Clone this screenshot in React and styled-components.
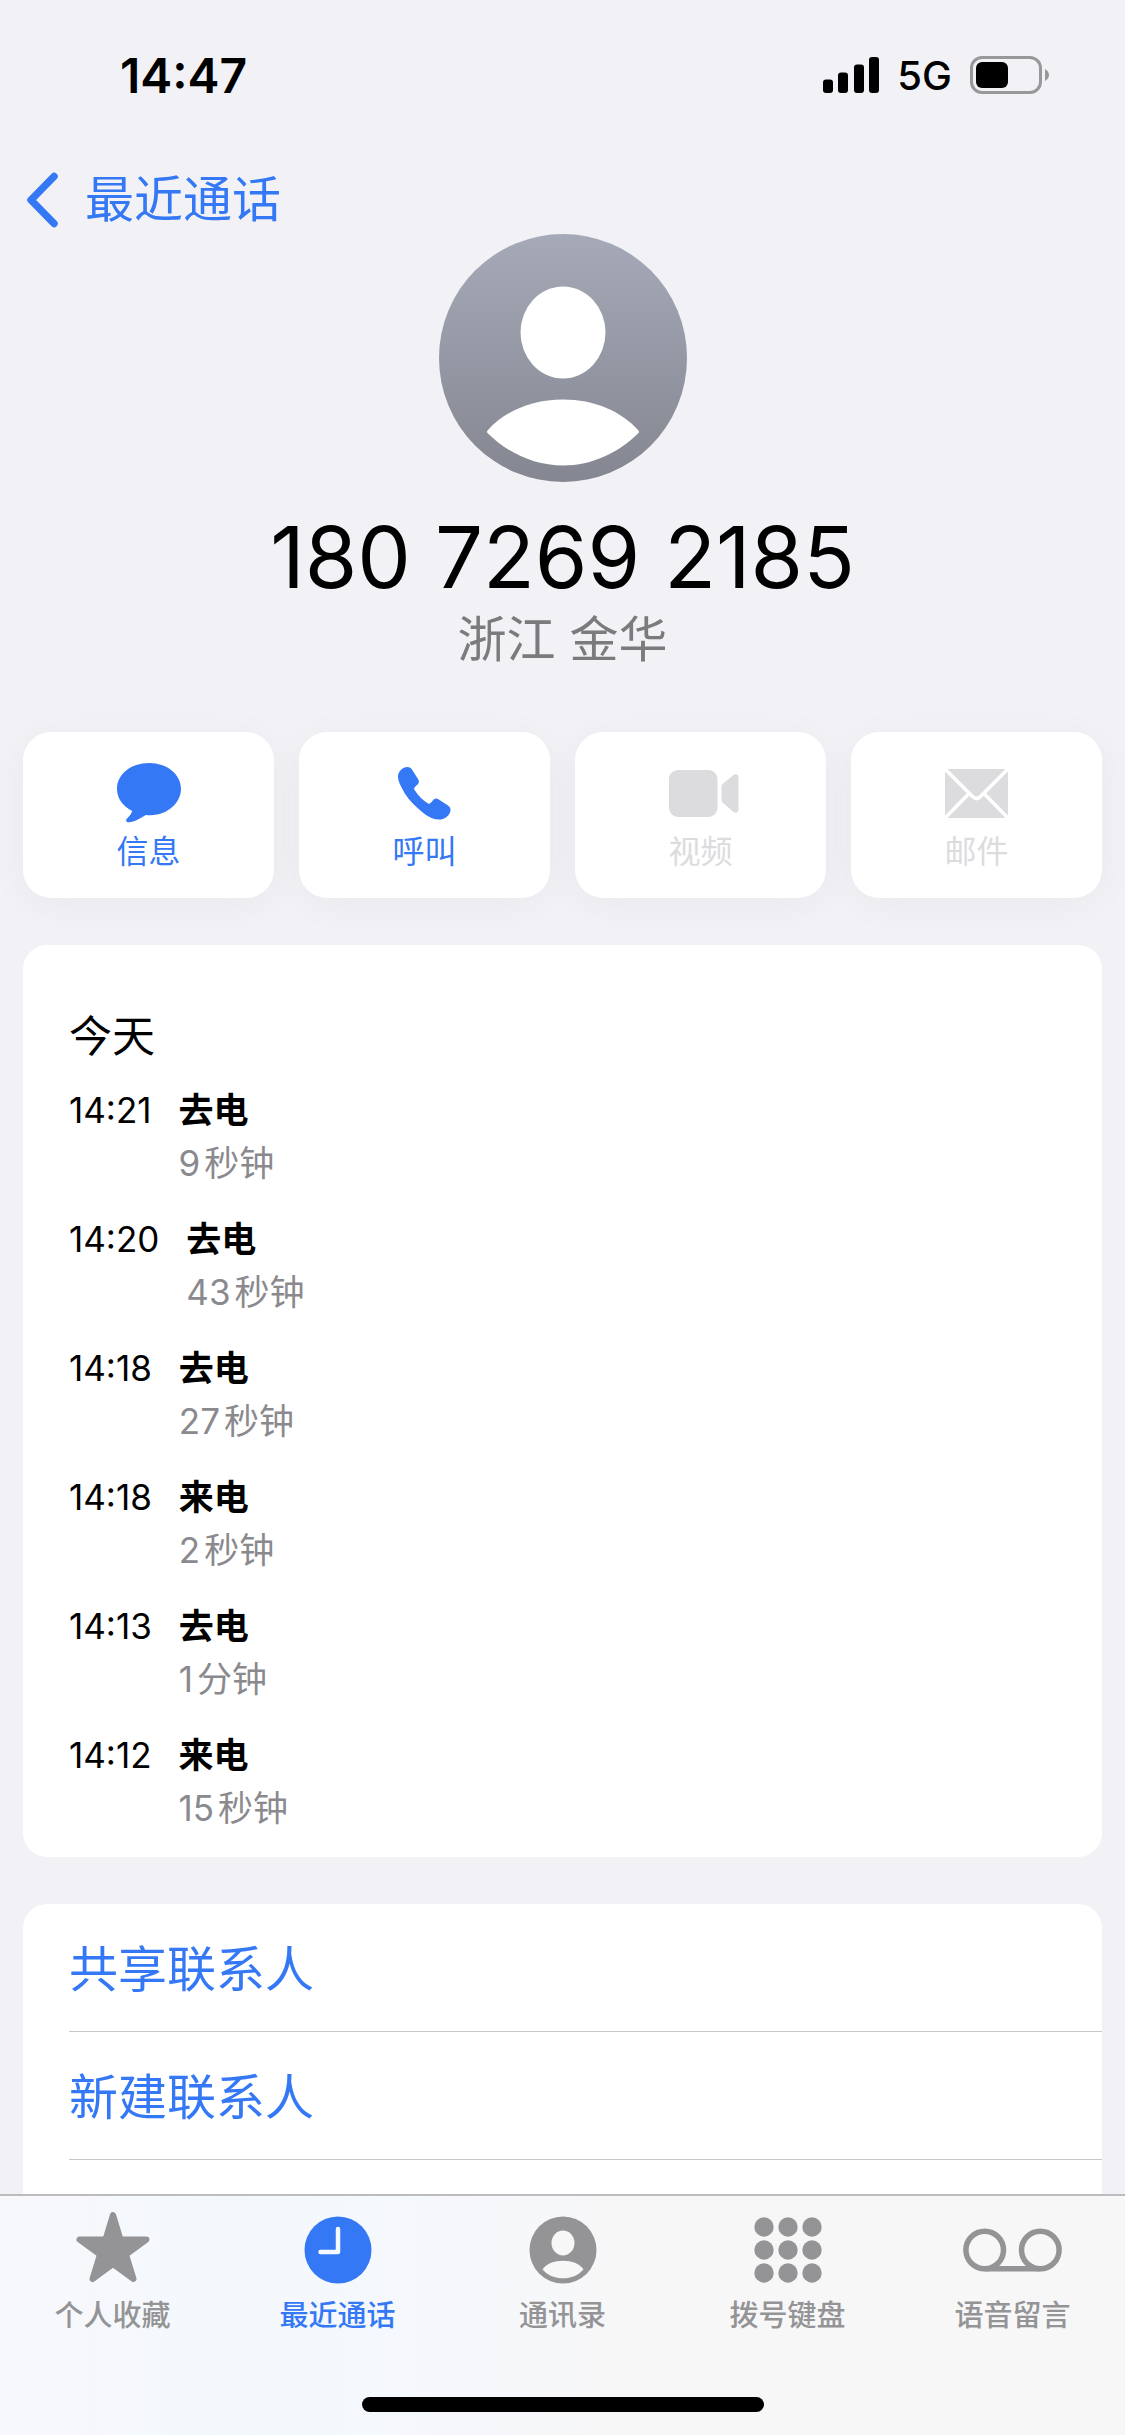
import React from 'react'
import styled, { createGlobalStyle } from 'styled-components'

const llamadas = [
  { hora: '14:21', tipo: '去电', cantidad: '9', unidad: '秒钟' },
  { hora: '14:20', tipo: '去电', cantidad: '43', unidad: '秒钟' },
  { hora: '14:18', tipo: '去电', cantidad: '27', unidad: '秒钟' },
  { hora: '14:18', tipo: '来电', cantidad: '2', unidad: '秒钟' },
  { hora: '14:13', tipo: '去电', cantidad: '1', unidad: '分钟' },
  { hora: '14:12', tipo: '来电', cantidad: '15', unidad: '秒钟' },
]

const acciones = [
  { nombre: '信息', icono: <IconMessage /> },
  { nombre: '呼叫', icono: <IconPhone /> },
  { nombre: '视频', icono: <IconVideo />, disabled: true },
  { nombre: '邮件', icono: <IconMail />, disabled: true },
]

const tabs = [
  { nombre: '个人收藏', icono: <IconStar /> },
  { nombre: '最近通话', icono: <IconClock />, activo: true },
  { nombre: '通讯录', icono: <IconContact /> },
  { nombre: '拨号键盘', icono: <IconKeypad /> },
  { nombre: '语音留言', icono: <IconVoicemail /> },
]

function App() {
  return (
    <Page>
      <GlobalStyle />
      <StatusBar>
        <Clock>14:47</Clock>
        <StatusIcons>
          <IconSignal />
          <Network>5G</Network>
          <IconBattery />
        </StatusIcons>
      </StatusBar>

      <Nav>
        <BackLink href='#recents'>
          <IconBack />
          <span>最近通话</span>
        </BackLink>
      </Nav>

      <Main>
        <Header>
          <Avatar />
          <Number>180 7269 2185</Number>
          <Place>浙江 金华</Place>
        </Header>

        <Actions>
          {acciones.map((a) => (
            <ActionButton key={a.nombre} type='button' disabled={a.disabled}>
              <ActionIcon>{a.icono}</ActionIcon>
              <span>{a.nombre}</span>
            </ActionButton>
          ))}
        </Actions>

        <History>
          <h2>今天</h2>
          <CallList>
            {llamadas.map((l, i) => (
              <Call key={i}>
                <Time>{l.hora}</Time>
                <div>
                  <Kind>{l.tipo}</Kind>
                  <Duration>
                    <span>{l.cantidad}</span>
                    <span>{l.unidad}</span>
                  </Duration>
                </div>
              </Call>
            ))}
          </CallList>
        </History>

        <Options>
          <OptionButton type='button'>共享联系人</OptionButton>
          <OptionButton type='button'>新建联系人</OptionButton>
        </Options>
      </Main>

      <TabBar>
        <Tabs>
          {tabs.map((t) => (
            <Tab key={t.nombre} href='#tab' $activo={t.activo}>
              <TabIcon>{t.icono}</TabIcon>
              <span>{t.nombre}</span>
            </Tab>
          ))}
        </Tabs>
        <HomeIndicator />
      </TabBar>
    </Page>
  )
}

function IconSignal() {
  return (
    <svg width='56' height='36' viewBox='0 0 56 36' fill='#000'>
      <rect x='0' y='22.500' width='10' height='13.500' rx='3' />
      <rect x='15' y='15.500' width='10' height='20.500' rx='3' />
      <rect x='31' y='7.500' width='10' height='28.500' rx='3' />
      <rect x='46' y='0' width='10' height='36' rx='3' />
    </svg>
  )
}

function IconBattery() {
  return (
    <svg width='79' height='38' viewBox='0 0 79 38'>
      <rect x='1.500' y='1.500' width='69' height='35' rx='10.500' fill='none' stroke='#98989b' strokeWidth='3' />
      <rect x='6' y='6' width='32' height='26' rx='6' fill='#000' />
      <path d='M75 13 C77.500 14.500 79 16.500 79 19 C79 21.500 77.500 23.500 75 25 Z' fill='#98989b' />
    </svg>
  )
}

function IconBack() {
  return (
    <svg width='33' height='56' viewBox='0 0 33 56' fill='none' stroke='currentColor' strokeWidth='7.500' strokeLinecap='round' strokeLinejoin='round'>
      <path d='M29 4.500 L6 28 L29 51.500' />
    </svg>
  )
}

function Avatar() {
  return (
    <svg width='248' height='248' viewBox='0 0 248 248'>
      <defs>
        <linearGradient id='avatar' x1='0' y1='0' x2='0' y2='1'>
          <stop offset='0' stopColor='#a6aab8' />
          <stop offset='1' stopColor='#848791' />
        </linearGradient>
      </defs>
      <circle cx='124' cy='124' r='124' fill='url(#avatar)' />
      <ellipse cx='124' cy='98.500' rx='42.500' ry='46' fill='#fff' />
      <path d='M48.500 196.500 C66 177 93 165.500 124 165.500 C155 165.500 182 177 199.500 196.500 Q200.500 198 199.500 199 C180 218.500 153 231.500 124 231.500 C95 231.500 68 218.500 48.500 199 Q47.500 198 48.500 196.500 Z' fill='#fff' />
    </svg>
  )
}

function IconMessage() {
  return (
    <svg width='64' height='60' viewBox='0 0 64 60' fill='currentColor'>
      <path d='M32 0 C50 0 64 12 64 27.500 C64 43 50 55.500 34 55.500 Q30.500 55.500 29 55.200 C24 58 17 63 12 63 C9 63 8.500 61 9.800 59.300 C12 57 14.500 54 15.300 51 C5.500 46 0 37.500 0 27.500 C0 12 14 0 32 0 Z' transform='scale(1 0.940)' />
    </svg>
  )
}

function IconPhone() {
  return (
    <svg width='53' height='53' viewBox='0 0 53 53' fill='currentColor'>
      <path d='M9.400 0 C11.500 0 13.200 1.200 14.400 3.200 L20.300 12.500 C21.200 14 21.100 15.500 20 17 L16.700 20.300 C16 21.200 16 22 16.600 23 C20 28.500 25 33.500 30 36.400 C31 37 31.800 36.800 32.500 36 L35.500 32.700 C37 31.200 38.600 31.100 40 32 L50 38.500 C52 39.900 53 42 52.400 44.300 C51 49.500 46 52.800 40.700 52.600 C34 52.400 28 48.500 22.300 43.500 C15 37 9.500 31.500 5.200 23.500 C2 18 0 13.500 0 9.800 C0 4.500 4.500 0 9.400 0 Z' />
    </svg>
  )
}

function IconVideo() {
  return (
    <svg width='76' height='47' viewBox='-6 0 76 47' fill='currentColor'>
      <rect x='0' y='0' width='48.500' height='47' rx='9' />
      <path d='M53.500 14 L64.500 5 C67 3.400 69.500 4.400 69.500 7 V40 C69.500 42.600 67 43.600 64.500 42 L53.500 32.500 Q52.500 31.500 52.500 30 V16.500 Q52.500 15 53.500 14 Z' />
    </svg>
  )
}

function IconMail() {
  return (
    <svg width='63' height='49' viewBox='0 0 63 49'>
      <rect width='63' height='49' rx='3' fill='currentColor' />
      <g fill='none' stroke='#fff' strokeWidth='3.600'>
        <path d='M0 0 L27.500 27.500 Q31.500 31.500 35.500 27.500 L63 0' />
        <path d='M0 49 L23 25.500 M63 49 L40 25.500' />
      </g>
    </svg>
  )
}

function IconStar() {
  return (
    <svg width='74' height='76' viewBox='0 1 74 76' fill='currentColor' stroke='currentColor' strokeWidth='6' strokeLinejoin='round'>
      <path d='M37 4 L44.500 28.500 H70.500 L50 43.500 L57.500 68 L37 53 L16.500 68 L24 43.500 L3.500 28.500 H29.500 Z' />
    </svg>
  )
}

function IconClock() {
  return (
    <svg width='68' height='68' viewBox='0 0 68 68'>
      <circle cx='34' cy='34' r='33.500' fill='currentColor' />
      <path d='M34 13 V36 H16.500' fill='none' stroke='#f5f8fd' strokeWidth='4.500' strokeLinecap='round' strokeLinejoin='round' />
    </svg>
  )
}

function IconContact() {
  return (
    <svg width='68' height='68' viewBox='0 0 68 68'>
      <circle cx='34' cy='34' r='33.500' fill='currentColor' />
      <ellipse cx='34' cy='27' rx='11.500' ry='12.500' fill='#f7f7f8' />
      <path d='M13.500 53.500 C18 47.500 25 44.800 34 44.800 C43 44.800 50 47.500 54.500 53.500 C49 59.500 42 62.300 34 62.300 C26 62.300 19 59.500 13.500 53.500 Z' fill='#f7f7f8' />
    </svg>
  )
}

function IconKeypad() {
  const pos = [-1, 0, 1]
  return (
    <svg width='68' height='68' viewBox='0 0 68 68' fill='currentColor'>
      {pos.map((y) => pos.map((x) => (
        <circle key={`${x}-${y}`} cx={34 + x * 24} cy={34 + y * 23} r='9.700' />
      )))}
    </svg>
  )
}

function IconVoicemail() {
  return (
    <svg width='99' height='44' viewBox='0 0 99 44' fill='none' stroke='currentColor' strokeWidth='5.500'>
      <circle cx='21.700' cy='22' r='18.800' />
      <circle cx='77.300' cy='22' r='18.800' />
      <path d='M21.700 40.800 H77.300' />
    </svg>
  )
}

const GlobalStyle = createGlobalStyle`
    *{
        box-sizing: border-box;
    }

    body{
        margin: 0;
        background: #f1f1f6;
        font-family: Inter, "Noto Sans CJK SC", sans-serif;
        color: #000;
    }

    svg{
        display: block;
        flex: none;
    }
`;

const Page = styled.div`
    display: flex;
    flex-direction: column;
    min-height: 100vh;
`;

const StatusBar = styled.div`
    display: flex;
    justify-content: space-between;
    align-items: center;
    height: 150px;
    padding: 0 76px 0 120px;
`;

const Clock = styled.div`
    font-size: 48px;
    font-weight: 600;
`;

const StatusIcons = styled.div`
    display: flex;
    align-items: center;
    gap: 18px;
`;

const Network = styled.div`
    font-size: 40px;
    font-weight: 500;
`;

const Nav = styled.nav`
    display: flex;
    padding: 0 25px;
    height: 84px;
`;

const BackLink = styled.a`
    display: flex;
    align-items: center;
    gap: 27px;
    height: 99px;
    color: #3478f6;
    font-size: 49px;
    line-height: 60px;
    text-decoration: none;
`;

const Main = styled.main`
    display: flex;
    flex-direction: column;
    flex: 1;
    padding: 0 23px;
`;

const Header = styled.header`
    display: flex;
    flex-direction: column;
    align-items: center;
`;

const Number = styled.h1`
    margin: 20px 0 0;
    font-size: 85px;
    font-weight: 400;
    line-height: 112px;
`;

const Place = styled.p`
    margin: 0;
    color: #7b7b7d;
    font-size: 49px;
    line-height: 52px;
`;

const Actions = styled.div`
    display: grid;
    grid-template-columns: repeat(4, 1fr);
    gap: 25px;
    margin-top: 66px;
`;

const ActionButton = styled.button`
    display: flex;
    flex-direction: column;
    align-items: center;
    height: 166px;
    padding: 29px 0 0;
    border: 0;
    border-radius: 28px;
    background: #fff;
    box-shadow: 0 6px 40px rgba(0, 0, 0, 0.04);
    color: #3478f6;
    font-family: inherit;
    font-size: 32px;
    line-height: 36px;

    &:disabled{
        color: #dcdcde;
    }
`;

const ActionIcon = styled.div`
    display: flex;
    align-items: center;
    height: 64px;
    margin-bottom: 9px;
`;

const History = styled.section`
    margin-top: 47px;
    padding: 60px 46px 15px;
    border-radius: 24px;
    background: #fff;

    h2{
        margin: 0;
        font-size: 43px;
        font-weight: 400;
        line-height: 62px;
    }
`;

const CallList = styled.ul`
    margin: 0;
    padding: 1px 0 0;
    list-style: none;
`;

const Call = styled.li`
    display: flex;
    gap: 27px;
    height: 129px;
    padding-top: 16px;
    line-height: 53px;
`;

const Time = styled.time`
    font-size: 35px;
`;

const Kind = styled.div`
    font-size: 35px;
    font-weight: 700;
`;

const Duration = styled.div`
    display: flex;
    gap: 4px;
    color: #8a8a8e;
    font-size: 35px;
`;

const Options = styled.section`
    display: flex;
    flex-direction: column;
    flex: 1;
    margin-top: 47px;
    padding-left: 46px;
    border-radius: 24px 24px 0 0;
    background: #fff;
`;

const OptionButton = styled.button`
    height: 128px;
    padding: 0 0 4px;
    border: 0;
    border-bottom: 1px solid #c6c6c8;
    background: none;
    color: #3478f6;
    font-family: inherit;
    font-size: 49px;
    text-align: left;
`;

const TabBar = styled.footer`
    position: sticky;
    bottom: 0;
    display: flex;
    flex-direction: column;
    align-items: center;
    justify-content: space-between;
    height: 241px;
    padding-bottom: 23px;
    border-top: 2px solid #bcbcbe;
    background: linear-gradient(90deg, #f7f8fb 0%, #f4f8fd 20%, #f5f8fd 33%, #f7f7f8 55%, #f7f7f8 100%);
`;

const Tabs = styled.nav`
    display: grid;
    grid-template-columns: repeat(5, 1fr);
    width: 100%;
`;

const Tab = styled.a`
    display: flex;
    flex-direction: column;
    align-items: center;
    padding-top: 16px;
    color: ${(props) => (props.$activo ? '#3478f6' : '#949496')};
    font-size: 29px;
    font-weight: 500;
    line-height: 40px;
    text-decoration: none;
`;

const TabIcon = styled.div`
    display: flex;
    align-items: center;
    height: 76px;
    margin-bottom: 8px;
`;

const HomeIndicator = styled.div`
    width: 402px;
    height: 15px;
    border-radius: 8px;
    background: #000;
`;

export default App
